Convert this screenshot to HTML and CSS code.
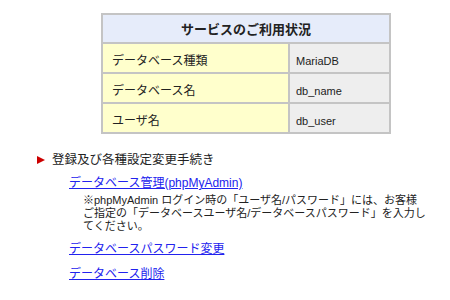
FILE: index.html
```html
<!DOCTYPE html>
<html lang="ja">
<head>
  <meta charset="UTF-8">
  <title>サービスのご利用状況</title>
  <link rel="stylesheet" href="styles.css">
</head>
<body>
  <div class="page">
    <table class="usage">
      <tr>
        <th colspan="2">サービスのご利用状況</th>
      </tr>
      <tr>
        <td class="label">データベース種類</td>
        <td class="value">MariaDB</td>
      </tr>
      <tr>
        <td class="label">データベース名</td>
        <td class="value">db_name</td>
      </tr>
      <tr>
        <td class="label">ユーザ名</td>
        <td class="value">db_user</td>
      </tr>
    </table>

    <div class="procedures">
      <h2 class="proc-title"><span class="arrow"></span>登録及び各種設定変更手続き</h2>
      <ul class="proc-list">
        <li>
          <a href="#">データベース管理(phpMyAdmin)</a>
          <p class="note">※phpMyAdmin ログイン時の「ユーザ名/パスワード」には、お客様ご指定の「データベースユーザ名/データベースパスワード」を入力してください。</p>
        </li>
        <li><a href="#">データベースパスワード変更</a></li>
        <li><a href="#">データベース削除</a></li>
      </ul>
    </div>
  </div>
</body>
</html>
```

FILE: styles.css
```css
body {
  margin: 0;
  font-family: "Liberation Sans", "Noto Sans CJK JP", sans-serif;
  color: #222;
  background: #fff;
}
.page {
  padding-top: 13px;
}
.usage {
  margin-left: 101px;
  width: 290px;
  border: 1px solid #c4c4c4;
  border-spacing: 0;
  line-height: 16px;
}
.usage th,
.usage td {
  border: 1px solid #c4c4c4;
  padding: 0;
}
.usage th {
  height: 24px;
  padding-top: 3px;
  background: #e6ecfa;
  font-size: 13px;
  font-weight: bold;
  text-align: center;
  color: #222;
}
.usage td {
  height: 23px;
  padding-top: 5px;
}
.usage .label {
  width: 176px;
  padding-left: 9px;
  background: #ffffcc;
  font-size: 12px;
}
.usage .value {
  padding-left: 6px;
  background: #eeeeee;
  font-size: 11px;
}
.procedures {
  margin-top: 18px;
  padding-left: 37px;
}
.proc-title {
  margin: 0;
  display: flex;
  align-items: center;
  gap: 7px;
  font-size: 12.5px;
  font-weight: normal;
  line-height: 16px;
}
.arrow {
  width: 0;
  height: 0;
  border-top: 4px solid transparent;
  border-bottom: 4px solid transparent;
  border-left: 8px solid #cc0000;
}
.proc-list {
  list-style: none;
  margin: 7px 0 0;
  padding-left: 32px;
}
.proc-list li {
  margin-bottom: 9px;
  font-size: 12px;
  line-height: 16px;
}
.proc-list a {
  color: #2222ee;
}
.note {
  margin: 3px 0 -1px 14px;
  width: 345px;
  font-size: 11px;
  line-height: 13px;
  color: #222;
}
```
